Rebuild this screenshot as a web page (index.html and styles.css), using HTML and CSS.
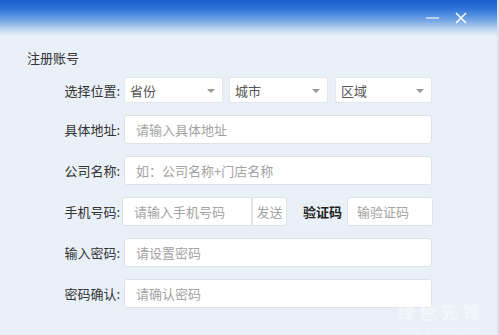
FILE: index.html
```html
<!DOCTYPE html>
<html lang="zh-CN">
<head>
<meta charset="utf-8">
<link rel="stylesheet" href="styles.css">
</head>
<body>
<div class="window">
  <div class="titlebar">
    <span class="btn-min"></span>
    <svg class="btn-close" width="12" height="12" viewBox="0 0 12 12"><path d="M1 1L11 11M11 1L1 11" stroke="#fff" stroke-width="1.5" fill="none"/></svg>
  </div>
  <div class="content">
    <div class="heading">注册账号</div>
    <div class="form">
      <div class="row row-select">
        <label class="label">选择位置:</label>
        <div class="select s1"><span>省份</span><i class="caret"></i></div>
        <div class="select s2"><span>城市</span><i class="caret"></i></div>
        <div class="select s3"><span>区域</span><i class="caret"></i></div>
      </div>
      <div class="row">
        <label class="label">具体地址:</label>
        <div class="input full">请输入具体地址</div>
      </div>
      <div class="row">
        <label class="label">公司名称:</label>
        <div class="input full">如：公司名称+门店名称</div>
      </div>
      <div class="row">
        <label class="label">手机号码:</label>
        <div class="input phone">请输入手机号码</div>
        <div class="send">发送</div>
        <span class="code-label">验证码</span>
        <div class="input code">输验证码</div>
      </div>
      <div class="row">
        <label class="label">输入密码:</label>
        <div class="input full">请设置密码</div>
      </div>
      <div class="row">
        <label class="label">密码确认:</label>
        <div class="input full">请确认密码</div>
      </div>
    </div>
  </div>
  <div class="watermark">
    <div class="wm-big">绿色先锋</div>
    <div class="wm-small">www.greenxf.com</div>
  </div>
</div>
</body>
</html>
```
FILE: styles.css
```css
* { box-sizing: border-box; }
html, body { margin: 0; padding: 0; }
body {
  width: 499px;
  height: 335px;
  overflow: hidden;
  font-family: "Noto Sans CJK SC", "Microsoft YaHei", sans-serif;
  background: #e9f0f8;
}
.window {
  position: relative;
  width: 499px;
  height: 335px;
  background: #e9f0f8;
  border-right: 2px solid #dbe3ee;
}
.titlebar {
  height: 36px;
  background: linear-gradient(to bottom, #1b5ccd 0%, #2f74d8 25%, #6fa3e6 55%, #bcd3f1 80%, #e9f0f8 100%);
  display: flex;
  align-items: center;
  justify-content: flex-end;
  padding-right: 30px;
  gap: 16px;
}
.btn-min {
  width: 13px;
  height: 2px;
  background: rgba(255,255,255,0.55);
}
.btn-close { display: block; margin-top: -1px; }
.content {
  padding: 14px 0 0 27px;
}
.heading {
  font-size: 13px;
  color: #333;
  line-height: 16px;
}
.form {
  margin-top: 11px;
  display: flex;
  flex-direction: column;
  gap: 12px;
}
.row {
  display: flex;
  align-items: center;
  height: 29px;
}
.row-select { height: 26px; }
.label {
  width: 94px;
  text-align: right;
  padding-right: 1px;
  margin-right: 3px;
  font-size: 13px;
  color: #333;
  white-space: nowrap;
}
.select {
  position: relative;
  height: 26px;
  background: #fff;
  border: 1px solid #e3e7ed;
  border-radius: 2px;
  font-size: 13px;
  color: #555;
  display: flex;
  align-items: center;
  padding-left: 5px;
}
.s1 { width: 99px; margin-right: 6px; }
.s2 { width: 99px; margin-right: 7px; }
.s3 { width: 97px; }
.caret {
  position: absolute;
  right: 7px;
  top: 11px;
  width: 0;
  height: 0;
  border-left: 4px solid transparent;
  border-right: 4px solid transparent;
  border-top: 4px solid #999;
}
.input {
  height: 29px;
  background: #fff;
  border: 1px solid #dde2e9;
  border-radius: 3px;
  font-size: 13px;
  color: #a3a3a3;
  display: flex;
  align-items: center;
  padding-left: 11px;
  white-space: nowrap;
}
.full { width: 308px; }
.phone { width: 130px; margin-left: -2px; border-radius: 3px 0 0 3px; }
.send {
  width: 35px;
  height: 29px;
  background: #fff;
  border: 1px solid #dde2e9;
  border-left: 1px solid #e6e9ee;
  border-radius: 0 3px 3px 0;
  font-size: 13px;
  color: #a3a3a3;
  display: flex;
  align-items: center;
  justify-content: center;
}
.code-label {
  margin-left: 16px;
  font-size: 13px;
  color: #222;
  font-weight: bold;
  width: 44px;
}
.code { width: 86px; padding-left: 9px; }
.watermark {
  position: absolute;
  right: 12px;
  bottom: 0;
  text-align: center;
  color: rgba(255,255,255,0.45);
  pointer-events: none;
  display: flex;
  flex-direction: column;
}
.wm-big { font-size: 18px; line-height: 26px; font-weight: bold; letter-spacing: 4px; }
.wm-small { font-size: 8px; line-height: 11px; letter-spacing: 1px; }
```
